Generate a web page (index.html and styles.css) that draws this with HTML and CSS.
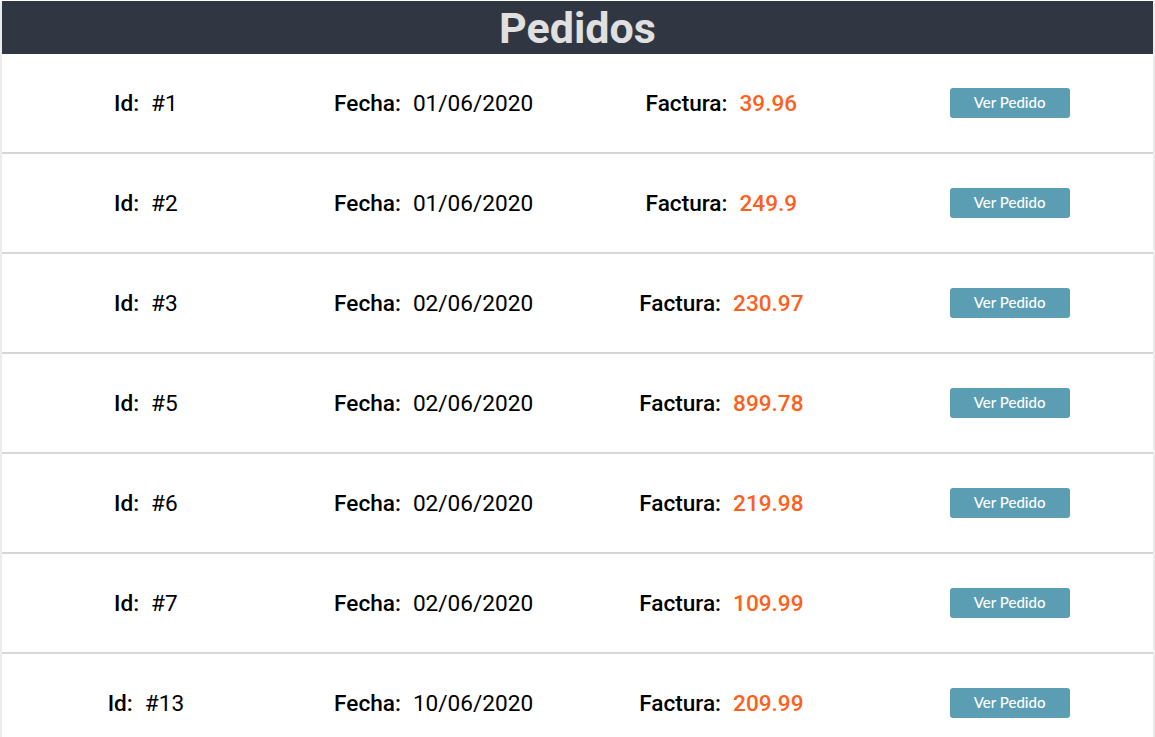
FILE: index.html
```html
<!DOCTYPE html>
<html lang="es">
<head>
<meta charset="utf-8">
<title>Pedidos</title>
<link rel="stylesheet" href="styles.css">
</head>
<body>
<div class="page">
  <header class="header"><h1 class="title">Pedidos</h1></header>
  <ul class="orders">
    <li class="order"><div class="cell"><b>Id:</b>#1</div><div class="cell"><b>Fecha:</b>01/06/2020</div><div class="cell"><b>Factura:</b><span class="price">39.96</span></div><div class="cell"><button class="btn">Ver Pedido</button></div></li>
    <li class="order"><div class="cell"><b>Id:</b>#2</div><div class="cell"><b>Fecha:</b>01/06/2020</div><div class="cell"><b>Factura:</b><span class="price">249.9</span></div><div class="cell"><button class="btn">Ver Pedido</button></div></li>
    <li class="order"><div class="cell"><b>Id:</b>#3</div><div class="cell"><b>Fecha:</b>02/06/2020</div><div class="cell"><b>Factura:</b><span class="price">230.97</span></div><div class="cell"><button class="btn">Ver Pedido</button></div></li>
    <li class="order"><div class="cell"><b>Id:</b>#5</div><div class="cell"><b>Fecha:</b>02/06/2020</div><div class="cell"><b>Factura:</b><span class="price">899.78</span></div><div class="cell"><button class="btn">Ver Pedido</button></div></li>
    <li class="order"><div class="cell"><b>Id:</b>#6</div><div class="cell"><b>Fecha:</b>02/06/2020</div><div class="cell"><b>Factura:</b><span class="price">219.98</span></div><div class="cell"><button class="btn">Ver Pedido</button></div></li>
    <li class="order"><div class="cell"><b>Id:</b>#7</div><div class="cell"><b>Fecha:</b>02/06/2020</div><div class="cell"><b>Factura:</b><span class="price">109.99</span></div><div class="cell"><button class="btn">Ver Pedido</button></div></li>
    <li class="order"><div class="cell"><b>Id:</b>#13</div><div class="cell"><b>Fecha:</b>10/06/2020</div><div class="cell"><b>Factura:</b><span class="price">209.99</span></div><div class="cell"><button class="btn">Ver Pedido</button></div></li>
  </ul>
</div>
</body>
</html>
```
FILE: styles.css
```css
html, body {
  margin: 0;
  padding: 0;
  background: #ffffff;
}
body {
  font-family: Roboto, "Liberation Sans", sans-serif;
  color: #000;
}
.page {
  border-left: 2px solid #ececec;
  border-right: 2px solid #ececec;
}
.header {
  background: #313742;
  height: 53px;
  margin-top: 1px;
  display: flex;
  align-items: center;
  justify-content: center;
}
.title {
  margin: 0;
  font-size: 43px;
  font-weight: 700;
  color: #e0e0e0;
  line-height: 53px;
  padding-top: 2px;
}
.orders {
  list-style: none;
  margin: 0;
  padding: 0;
}
.order {
  display: grid;
  grid-template-columns: repeat(4, 1fr);
  height: 98px;
  border-bottom: 2px solid #d6d6d6;
  align-items: center;
}
.cell {
  display: flex;
  justify-content: center;
  align-items: center;
  gap: 12px;
  font-size: 22.6px;
}
.cell b {
  font-weight: 500;
}
.price {
  color: #ff5f1c;
  font-weight: 500;
}
.btn {
  width: 120px;
  height: 30px;
  border: none;
  border-radius: 3px;
  background: #5b9eb4;
  color: #ffffff;
  font-family: Lato, "Liberation Sans", sans-serif;
  font-size: 15px;
  font-weight: 500;
  padding: 0 0 2px 0;
  margin-left: 1px;
}
```
